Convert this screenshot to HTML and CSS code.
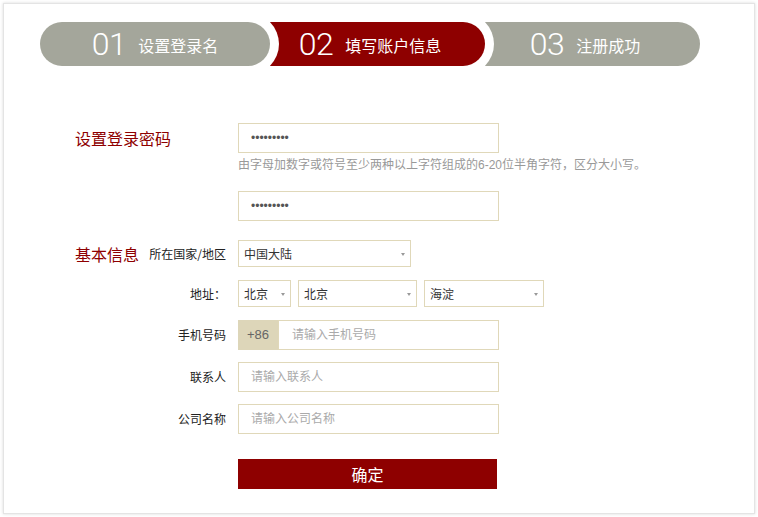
FILE: index.html
```html
<!DOCTYPE html>
<html lang="zh-CN">
<head>
<meta charset="utf-8">
<title>填写账户信息</title>
<link rel="stylesheet" href="styles.css">
</head>
<body>
<div class="card">
  <div class="steps">
    <div class="step step-1"><span class="num">01</span><span class="txt">设置登录名</span></div>
    <div class="step step-2 active"><span class="num">02</span><span class="txt">填写账户信息</span></div>
    <div class="step step-3"><span class="num">03</span><span class="txt">注册成功</span></div>
  </div>

  <form class="form">
    <div class="row row-pwd1">
      <div class="lab"><span class="title">设置登录密码</span></div>
      <input class="field" type="password" value="123456789">
    </div>
    <div class="row row-hint">
      <div class="lab"></div>
      <p class="hint">由字母加数字或符号至少两种以上字符组成的6-20位半角字符，区分大小写。</p>
    </div>
    <div class="row row-pwd2">
      <div class="lab"></div>
      <input class="field" type="password" value="123456789">
    </div>

    <div class="row row-country">
      <div class="lab"><span class="title">基本信息</span><span class="sub">所在国家/地区</span></div>
      <div class="select sel-country"><span>中国大陆</span><i class="arrow"></i></div>
    </div>
    <div class="row row-addr">
      <div class="lab"><span class="sub">地址：</span></div>
      <div class="selects">
        <div class="select sel-prov"><span>北京</span><i class="arrow"></i></div>
        <div class="select sel-city"><span>北京</span><i class="arrow"></i></div>
        <div class="select sel-dist"><span>海淀</span><i class="arrow"></i></div>
      </div>
    </div>
    <div class="row row-phone">
      <div class="lab"><span class="sub">手机号码</span></div>
      <div class="phone">
        <span class="prefix">+86</span>
        <input class="field phone-input" type="text" placeholder="请输入手机号码">
      </div>
    </div>
    <div class="row row-contact">
      <div class="lab"><span class="sub">联系人</span></div>
      <input class="field" type="text" placeholder="请输入联系人">
    </div>
    <div class="row row-company">
      <div class="lab"><span class="sub">公司名称</span></div>
      <input class="field" type="text" placeholder="请输入公司名称">
    </div>
    <div class="row row-submit">
      <div class="lab"></div>
      <button class="submit" type="button">确定</button>
    </div>
  </form>
</div>
</body>
</html>
```
FILE: styles.css
```css
* { box-sizing: border-box; }

html, body {
  margin: 0;
  padding: 0;
  background: #fff;
}

body {
  padding: 3px;
  font-family: "Liberation Sans", "Noto Sans CJK SC", sans-serif;
  color: #222;
}

.card {
  width: 752px;
  height: 511px;
  border: 1px solid #e4e4e4;
  box-shadow: 0 0 3px rgba(0, 0, 0, 0.15);
  background: #fff;
  padding: 18px 0 0 36px;
}

/* ---------- steps ---------- */
.steps {
  display: flex;
}

.step {
  width: 230px;
  height: 44px;
  background: #a4a69b;
  border-radius: 0 22px 22px 0;
  box-shadow: 0 0 0 9px #fff;
  display: flex;
  align-items: center;
  justify-content: center;
  gap: 12px;
  color: #fff;
  position: relative;
}

.step + .step { margin-left: -15px; }

.step-1 { border-radius: 22px; z-index: 3; }
.step-2 { z-index: 2; }
.step-3 { z-index: 1; box-shadow: none; }

.step.active { background: #8e0000; }

.num {
  font-family: "Roboto", "Open Sans", sans-serif;
  font-weight: 300;
  font-size: 32px;
  line-height: 44px;
  letter-spacing: -0.5px;
}

.txt {
  font-family: "Noto Sans CJK SC", sans-serif;
  font-size: 16px;
  line-height: 44px;
  padding-top: 1px;
}

/* ---------- form ---------- */
.form {
  margin: 0 0 0 35px;
  display: flex;
  flex-direction: column;
}

.row {
  display: flex;
  align-items: center;
}

.lab {
  width: 151px;
  margin-right: 12px;
  flex: none;
  display: flex;
  align-items: center;
  justify-content: flex-end;
}

.title {
  margin-right: auto;
  font-family: "Noto Sans CJK SC", sans-serif;
  font-size: 16px;
  line-height: 20px;
  color: #8e0000;
}

.sub {
  font-family: "Noto Sans CJK SC", sans-serif;
  font-size: 12px;
  line-height: 16px;
  color: #222;
}

.row-pwd1 { margin-top: 57px; }
.row-hint { margin-top: 2px; }
.row-pwd2 { margin-top: 16px; }
.row-country { margin-top: 19px; }
.row-addr { margin-top: 13px; }
.row-phone { margin-top: 13px; }
.row-contact { margin-top: 12px; }
.row-company { margin-top: 12px; }
.row-submit { margin-top: 25px; }

.field {
  width: 261px;
  height: 30px;
  margin: 0;
  border: 1px solid #e0d8b9;
  border-radius: 0;
  padding: 0 12px;
  font-family: "Liberation Sans", "Noto Sans CJK SC", sans-serif;
  font-size: 12px;
  color: #555;
  background: #fff;
  outline: none;
}

.field::placeholder {
  color: #aaa;
  font-family: "Noto Sans CJK SC", sans-serif;
  font-size: 12px;
}

.hint {
  margin: 0;
  font-family: "Liberation Sans", "Noto Sans CJK SC", sans-serif;
  font-size: 12px;
  line-height: 20px;
  color: #999;
  white-space: nowrap;
}

.selects {
  display: flex;
  gap: 7px;
}

.select {
  height: 27px;
  border: 1px solid #e0d8b9;
  display: flex;
  align-items: center;
  justify-content: space-between;
  padding: 0 5px 0 5px;
  font-family: "Noto Sans CJK SC", sans-serif;
  font-size: 12px;
  color: #333;
}

.sel-country { width: 173px; }
.sel-prov { width: 53px; }
.sel-city { width: 119px; }
.sel-dist { width: 120px; }

.arrow {
  width: 0;
  height: 0;
  border-left: 2.5px solid transparent;
  border-right: 2.5px solid transparent;
  border-top: 3px solid #999;
  margin-top: 1px;
}

.phone {
  display: flex;
  width: 261px;
  height: 30px;
}

.prefix {
  width: 40px;
  flex: none;
  background: #ddd6b9;
  color: #666;
  font-size: 13px;
  line-height: 30px;
  text-align: center;
}

.phone-input {
  width: 221px;
  padding-left: 13px;
}

.submit {
  width: 259px;
  height: 30px;
  border: 0;
  margin: 0;
  padding: 0;
  background: #8e0000;
  color: #fff;
  font-family: "Noto Sans CJK SC", sans-serif;
  font-size: 16px;
  line-height: 30px;
  cursor: pointer;
}
```
